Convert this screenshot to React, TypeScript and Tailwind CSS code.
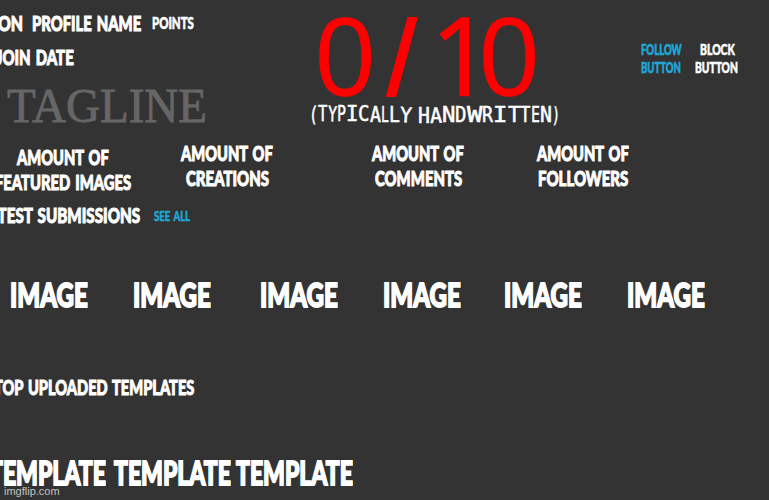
import React, { useLayoutEffect, useRef, useState } from 'react';

interface FitTextProps {
  className: string;
  children: string;
}

// Condensed heading text, squeezed to the width of its box
const FitText: React.FC<FitTextProps> = ({ className, children }) => {
  const box = useRef<HTMLDivElement>(null);
  const text = useRef<HTMLSpanElement>(null);
  const [scale, setScale] = useState(1);

  useLayoutEffect(() => {
    if (box.current && text.current) {
      setScale(box.current.clientWidth / text.current.offsetWidth);
    }
  }, [children]);

  return (
    <div ref={box} className={`shrink-0 whitespace-nowrap ${className}`}>
      <span ref={text} className="inline-block origin-left" style={{ transform: `scaleX(${scale})` }}>
        {children}
      </span>
    </div>
  );
};

const stats = [
  { label: "FEATURED IMAGES", box: "-ml-[7px] w-[139px] mt-1", top: "w-[92px]", bottom: "w-[136px]" },
  { label: "CREATIONS", box: "ml-[49px] w-[92px]", top: "w-[92px]", bottom: "w-[83px]" },
  { label: "COMMENTS", box: "ml-[99px] w-[92px]", top: "w-[92px]", bottom: "w-[87px]" },
  { label: "FOLLOWERS", box: "ml-[73px] w-[92px]", top: "w-[92px]", bottom: "w-[90px]" },
];

const images = ["ml-[10px]", "ml-[45px]", "ml-[49px]", "ml-[45px]", "ml-[43px]", "ml-[45px]"];

const templates = ["-ml-[11px]", "ml-[8px]", "ml-[5px]"];

// letter, cell width, vertical shift, tilt
const handwriting: [string, number, number, number][] = [
  ["(", 9, 0, 4], ["T", 9.5, 0, 0], ["Y", 9, 0, 3], ["P", 9, 0, 0], ["I", 12.5, 0, 0],
  ["C", 11.5, 0, 0], ["A", 11, 1, 0], ["L", 8, 1, 0], ["L", 11, 1, 0], ["Y", 12, 1, 4], [" ", 6, 0, 0],
  ["H", 12, 2, 0], ["A", 12, 2, -2], ["N", 13.5, 1, 0], ["D", 11.5, 1, 0], ["W", 15.5, 1, 0],
  ["R", 11, 1, 0], ["I", 14.5, 1, 0], ["T", 12.5, 1, 0], ["T", 10.5, 1, 0], ["E", 9, 1, 0],
  ["N", 12, 1, 0], [")", 8, 1, 4],
];

const App: React.FC = () => {
  return (
    <main className="relative w-[769px] h-[500px] overflow-hidden bg-[#333333] text-white font-black font-[Lato,sans-serif] [word-spacing:2px] [-webkit-text-stroke:1px]">
      {/* Header */}
      <header className="flex h-[141px]">
        <div className="w-[309px] shrink-0 pt-[11px]">
          <div className="flex items-center h-6 text-[20.5px] leading-6">
            <FitText className="-ml-[17px] w-[40px]">ICON</FitText>
            <FitText className="ml-[9px] w-[109px]">PROFILE NAME</FitText>
            <FitText className="ml-[11px] w-[42px] text-[16px] [-webkit-text-stroke:0.6px]">POINTS</FitText>
          </div>
          <FitText className="-ml-[4px] mt-[10px] w-[78px] text-[20.5px] leading-6">JOIN DATE</FitText>
          <FitText className="ml-[7px] mt-[10px] w-[200px] text-[48px] leading-[54px] font-normal text-[#666666] font-['Liberation_Serif',serif] [-webkit-text-stroke:0.8px]">
            TAGLINE
          </FitText>
        </div>

        {/* Score */}
        <div className="w-[332px] shrink-0 font-normal">
          <div className="flex h-[102px] pl-[6px] text-[114px] leading-[114px] text-[#ff0000] font-['Liberation_Sans',sans-serif] [-webkit-text-stroke:0px]">
            <span className="w-[72px] origin-left scale-x-95">0</span>
            <span className="w-[43px] text-[106px] leading-[116px] [-webkit-text-stroke:2px]">/</span>
            <span className="w-[49px] text-[110px] leading-[106px] font-['Noto_Sans',sans-serif] [-webkit-text-stroke:0.5px]">1</span>
            <span className="origin-left scale-x-95">0</span>
          </div>
          <div className="flex h-6 text-[21px] leading-6 font-['DejaVu_Sans_Mono',monospace] [word-spacing:0px] [-webkit-text-stroke:0.5px]">
            {handwriting.map(([letter, width, shift, tilt], idx) => (
              <span key={idx} className="shrink-0 whitespace-pre" style={{ width }}>
                <span
                  className="inline-block origin-left"
                  style={{ transform: `translateY(${shift}px) scaleX(${width / 12.7}) rotate(${tilt}deg)` }}
                >
                  {letter}
                </span>
              </span>
            ))}
          </div>
        </div>

        {/* Actions */}
        <div className="flex pt-[41px] text-[14.5px] leading-[17.5px] [-webkit-text-stroke:0.6px]">
          <div className="w-[41px] text-[#1fa8d8]">
            <FitText className="w-[41px]">FOLLOW</FitText>
            <FitText className="w-[40px]">BUTTON</FitText>
          </div>
          <div className="ml-[13px] w-[43px] text-[15.5px]">
            <FitText className="ml-[5px] w-[35px]">BLOCK</FitText>
            <FitText className="w-[43px]">BUTTON</FitText>
          </div>
        </div>
      </header>

      {/* Stats */}
      <section className="flex h-[61px] text-[20.5px] leading-[25px]">
        {stats.map((item) => (
          <div key={item.label} className={`flex flex-col items-center shrink-0 ${item.box}`}>
            <FitText className={item.top}>AMOUNT OF</FitText>
            <FitText className={item.bottom}>{item.label}</FitText>
          </div>
        ))}
      </section>

      {/* Latest submissions */}
      <section className="h-[173px]">
        <div className="flex items-center h-[26px] text-[20.5px] leading-6">
          <FitText className="-ml-[20px] w-[160px]">LATEST SUBMISSIONS</FitText>
          <FitText className="ml-[14px] w-[36px] mt-px text-[14px] text-[#1fa8d8] [-webkit-text-stroke:0.5px]">SEE ALL</FitText>
        </div>
        <div className="flex mt-[46px] text-[33px] leading-10 [-webkit-text-stroke:1.8px]">
          {images.map((margin, idx) => (
            <FitText key={idx} className={`w-[78px] ${margin}`}>IMAGE</FitText>
          ))}
        </div>
      </section>

      {/* Top templates */}
      <section>
        <FitText className="-ml-[6px] w-[200px] text-[20.5px] leading-6">TOP UPLOADED TEMPLATES</FitText>
        <div className="flex mt-[53px] text-[33px] leading-10 [-webkit-text-stroke:1.8px]">
          {templates.map((margin, idx) => (
            <FitText key={idx} className={`w-[117px] ${margin}`}>TEMPLATE</FitText>
          ))}
        </div>
      </section>

      <span className="absolute left-[4px] bottom-[2px] text-[11px] leading-[14px] font-normal text-[#c4c4c4] font-['Liberation_Sans',sans-serif] [-webkit-text-stroke:0px]">
        imgflip.com
      </span>
    </main>
  );
};

export default App;
